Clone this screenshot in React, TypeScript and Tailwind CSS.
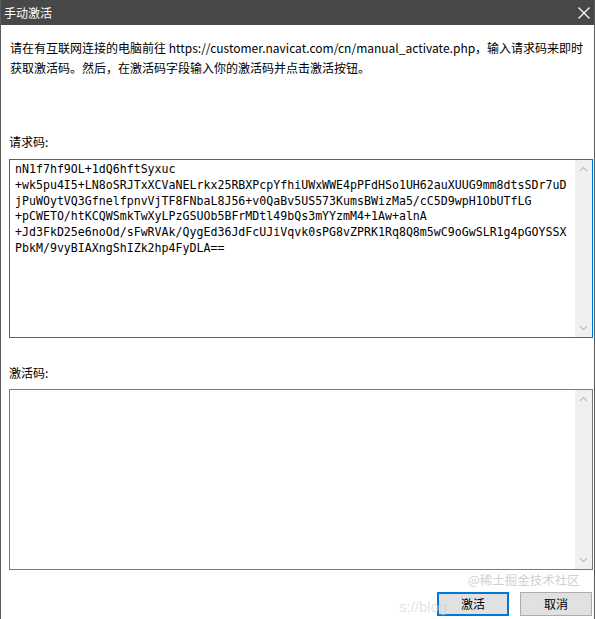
import React from "react";

const cjk = { fontFamily: '"Segoe UI", "Noto Sans CJK SC", "Noto Sans", sans-serif' };
const mono = { fontFamily: '"DejaVu Sans Mono", "Liberation Mono", monospace' };

const requestLines = [
  "nN1f7hf9OL+1dQ6hftSyxuc",
  "+wk5pu4I5+LN8oSRJTxXCVaNELrkx25RBXPcpYfhiUWxWWE4pPFdHSo1UH62auXUUG9mm8dtsSDr7uD",
  "jPuWOytVQ3GfnelfpnvVjTF8FNbaL8J56+v0QaBv5US573KumsBWizMa5/cC5D9wpH1ObUTfLG",
  "+pCWETO/htKCQWSmkTwXyLPzGSUOb5BFrMDtl49bQs3mYYzmM4+1Aw+alnA",
  "+Jd3FkD25e6noOd/sFwRVAk/QygEd36JdFcUJiVqvk0sPG8vZPRK1Rq8Q8m5wC9oGwSLR1g4pGOYSSX",
  "PbkM/9vyBIAXngShIZk2hp4FyDLA==",
];

function Chevron({ up }: { up?: boolean }) {
  return (
    <svg width="9" height="6" viewBox="0 0 9 6" className="block">
      <path
        d={up ? "M1 5 L4.5 1.5 L8 5" : "M1 1 L4.5 4.5 L8 1"}
        fill="none"
        stroke="#c2c2c2"
        strokeWidth="1.4"
      />
    </svg>
  );
}

function Scrollbar() {
  return (
    <div className="w-[17px] bg-[#f0f0f0] flex flex-col justify-between items-center py-[6px] shrink-0">
      <Chevron up />
      <Chevron />
    </div>
  );
}

export default function App() {
  return (
    <div className="w-[595px] h-[619px] bg-white relative overflow-hidden border-x border-[#5c5c5c] flex flex-col" style={cjk}>
      <div className="h-[25px] bg-[#484848] flex items-center justify-between pl-[3px] pr-[2px] shrink-0">
        <span className="text-white text-[12px] leading-none">手动激活</span>
        <svg width="14" height="14" viewBox="0 0 14 14" className="mr-[1px]">
          <path d="M1.5 1.5 L12.5 12.5 M12.5 1.5 L1.5 12.5" stroke="#ffffff" strokeWidth="1.2" />
        </svg>
      </div>

      <div className="pl-[8px] pr-[1px] pt-[13px] text-[12px] leading-[20px] text-black">
        <div className="pl-[1px]">
          请在有互联网连接的电脑前往 https://customer.navicat.com/cn/manual_activate.php，输入请求码来即时
          <br />
          获取激活码。然后，在激活码字段输入你的激活码并点击激活按钮。
        </div>

        <div className="mt-[54px] leading-[20px] text-[12px]">请求码:</div>
        <div className="mt-[7px] h-[179px] border border-[#0078d7] flex">
          <div className="flex-1 px-[5px] pt-[2px] text-[11.6px] leading-[15.8px] text-black whitespace-pre" style={mono}>
            {requestLines.join("\n")}
          </div>
          <Scrollbar />
        </div>

        <div className="mt-[25px] leading-[20px] text-[12px]">激活码:</div>
        <div className="mt-[6px] h-[181px] border border-[#7a7a7a] flex">
          <div className="flex-1" />
          <Scrollbar />
        </div>

        <div className="mt-[22px] flex justify-end gap-[11px] pr-[1px]">
          <button className="w-[72px] h-[24px] bg-[#e1e1e1] border-2 border-[#0078d7] text-[12px] text-black leading-none">
            激活
          </button>
          <button className="w-[72px] h-[24px] bg-[#e1e1e1] border border-[#adadad] text-[12px] text-black leading-none">
            取消
          </button>
        </div>
      </div>

      <div className="absolute left-[398px] top-[596px] text-[15px] text-[#d0d0d0]/60 whitespace-nowrap pointer-events-none" style={{ fontFamily: '"Liberation Sans", sans-serif' }}>
        s://blog
      </div>
      <div className="absolute left-[467px] top-[572px] text-[12.5px] leading-[16px] text-[#c4c4c4]/80 whitespace-nowrap pointer-events-none">
        @稀土掘金技术社区
      </div>
    </div>
  );
}
